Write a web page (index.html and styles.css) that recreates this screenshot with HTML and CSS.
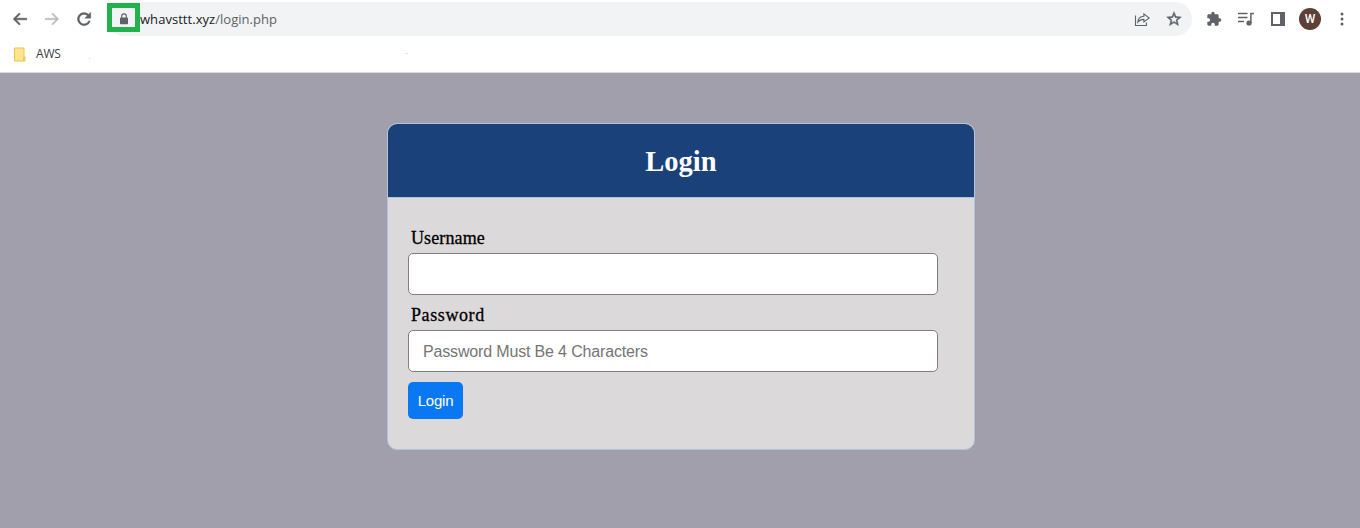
FILE: index.html
```html
<!DOCTYPE html>
<html lang="en">
<head>
<meta charset="utf-8">
<title>Login</title>
<link rel="stylesheet" href="styles.css">
</head>
<body>
<header class="chrome">
  <div class="toolbar">
    <nav class="nav">
      <svg class="icon" viewBox="0 0 24 24"><path class="dark" d="M21 11H6.8l5.6-5.6L11 4l-8 8 8 8 1.4-1.4L6.8 13H21z" stroke="#5f6368" stroke-width=".9"/></svg>
      <svg class="icon" viewBox="0 0 24 24"><path class="faded" d="M3 11h14.2l-5.6-5.6L13 4l8 8-8 8-1.4-1.4 5.6-5.6H3z" stroke="#babcbe" stroke-width=".6"/></svg>
      <svg class="icon" viewBox="0 0 24 24"><path class="dark" d="M18.2 5.8A8.8 8.8 0 1 0 20.5 14.5h-2.6A6.3 6.3 0 1 1 16.4 7.6L13 11h8V3z" stroke="#5f6368" stroke-width=".5"/></svg>
    </nav>
    <div class="omnibox">
      <span class="lock"><svg width="14" height="14" viewBox="0 0 14 14"><path d="M4.700 6V4.200a2.300 2.300 0 0 1 4.600 0V6" fill="none" stroke="#5f6368" stroke-width="1.100"/><rect class="dark" x="3" y="5.500" width="8" height="6.800" rx=".8"/></svg></span>
      <span class="url"><span class="host">whavsttt.xyz</span><span class="path">/login.php</span></span>
      <svg class="box-icon share" viewBox="0 0 16 16"><path class="line" d="M1.500 4.500v10h10.900v-3M3.800 11.200C4 7.600 6.100 5.400 9.900 5.200V2.800L15.200 7l-5.300 4V8.400c-2.800-.1-4.500.7-6.100 2.800z"/></svg>
      <svg class="box-icon star" viewBox="1 1 22 22"><path class="dark" d="M22 9.240l-7.190-.620L12 2 9.190 8.630 2 9.240l5.460 4.730L5.820 21 12 17.270 18.180 21l-1.630-7.030L22 9.240zM12 15.400l-3.760 2.270 1-4.280-3.320-2.880 4.380-.380L12 6.100l1.710 4.040 4.380.380-3.320 2.880 1 4.280z" stroke="#5f6368" stroke-width=".7"/></svg>
    </div>
    <div class="actions">
      <svg class="action puzzle" viewBox="0 0 24 24"><path class="dark" d="M20.500 11H19V7c0-1.100-.900-2-2-2h-4V3.500a2.500 2.500 0 0 0-5 0V5H4c-1.100 0-2 .900-2 2v3.800h1.500a2.700 2.700 0 0 1 0 5.400H2V20c0 1.100.900 2 2 2h3.800v-1.500a2.700 2.700 0 0 1 5.400 0V22H17c1.100 0 2-.900 2-2v-4h1.500a2.500 2.500 0 0 0 0-5z"/></svg>
      <svg class="action" viewBox="0 0 16 16"><path class="line media" d="M0 2.500h9.500M0 6.500h9.500M0 10.500h6M12.900 12V2.500H16"/><circle class="dark" cx="11" cy="12" r="2.600"/></svg>
      <svg class="action" viewBox="0 0 16 16"><path class="dark" d="M1 1h14v14H1zM3 3v10h7V3z" fill-rule="evenodd"/></svg>
      <span class="avatar">W</span>
      <svg class="more" viewBox="0 0 4 16"><circle class="dark" cx="2" cy="3" r="1.500"/><circle class="dark" cx="2" cy="8" r="1.500"/><circle class="dark" cx="2" cy="13" r="1.500"/></svg>
    </div>
  </div>
  <div class="bookmarks">
    <svg width="13" height="15" viewBox="0 0 13 15"><path d="M1.500 1h9.500v9h1v4H1.500z" fill="#ffe591" stroke="#e7c547"/><path d="M10.500 13.500v-3H12" fill="none" stroke="#e7c547"/></svg>
    <span class="bookmark">AWS</span>
    <i class="speck"></i><i class="speck dash"></i>
  </div>
</header>
<main class="page">
  <section class="card">
    <h1 class="title">Login</h1>
    <form class="form">
      <label class="label" for="username">Username</label>
      <input class="input" id="username" type="text">
      <label class="label wide" for="password">Password</label>
      <input class="input" id="password" type="password" placeholder="Password Must Be 4 Characters">
      <button class="submit" type="button">Login</button>
    </form>
  </section>
</main>
</body>
</html>
```
FILE: styles.css
```css
* { box-sizing: border-box; }
body { margin: 0; height: 528px; overflow: hidden; display: flex; flex-direction: column; background: #a09fab; }
.dark { fill: #5f6368; }
.faded { fill: #babcbe; }
.line { fill: none; stroke: #5f6368; stroke-width: 1.1; }
.media { stroke-width: 1.5; }
.chrome { height: 73px; flex: none; background: #fff; border-bottom: 1px solid #dadbdf; font-family: "Open Sans", "Noto Sans", sans-serif; }
.toolbar { height: 38px; display: flex; align-items: center; }
.nav { display: flex; gap: 14px; width: 107px; padding-left: 11px; }
.icon { width: 18px; height: 18px; }
.omnibox { width: 1085px; height: 34px; display: flex; align-items: center; background: #f1f3f4; border-radius: 17px; }
.lock { width: 33px; height: 29px; margin-top: -3px; border: 5px solid #22b14c; display: flex; align-items: center; justify-content: center; }
.lock svg { margin-top: 2px; }
.url { font-size: 13px; line-height: 20px; letter-spacing: .04px; white-space: nowrap; }
.host { color: #202124; }
.path { color: #5f6368; }
.box-icon { width: 16px; height: 16px; }
.share { margin-left: auto; }
.star { margin: 0 10px 0 16px; }
.actions { display: flex; align-items: center; padding-left: 14px; gap: 16px; }
.action { width: 16px; height: 16px; }
.avatar { width: 22px; height: 22px; margin: 0 -3px; border-radius: 50%; background: #5d4037; color: #fff; font: 500 12px/22px Roboto, sans-serif; text-align: center; }
.more { width: 4px; height: 16px; margin-left: 6px; }
.bookmarks { height: 32px; display: flex; align-items: center; padding-left: 13px; }
.bookmark { width: 53px; margin-top: -2px; padding-left: 10px; font-size: 12px; letter-spacing: -.2px; color: #3c4043; }
.speck { width: 1px; height: 1px; margin: 9px 0 0 10px; background: #f0cf9a; }
.dash { width: 3px; margin: -1px 0 0 315px; background: #fbe3c4; }
.page { flex: 1; padding-top: 50px; }
.card { width: 588px; height: 327px; margin-left: 387px; border: 1px solid #b0c4de; border-radius: 10px; background: #dbd9da; overflow: hidden; }
.title { height: 74px; margin: 0; border-bottom: 1px solid #b0c4de; background: #1b417a; color: #fff; font: bold 28.500px/75px "Liberation Serif", serif; text-align: center; }
.form { display: flex; flex-direction: column; align-items: flex-start; padding: 26px 20px 0; }
.label { height: 29px; padding-left: 3px; color: #000; font: 18px/29px "Liberation Serif", serif; letter-spacing: .12px; -webkit-text-stroke: .3px #000; }
.wide { letter-spacing: .6px; }
.input { width: 530px; height: 42px; margin: 0 0 6px; padding: 2px 14px 0; border: 1px solid gray; border-radius: 5px; background: #fff; font: 16px "Liberation Sans", sans-serif; letter-spacing: -.16px; }
.input::placeholder { color: #757575; }
.submit { width: 55px; height: 37px; margin-top: 4px; padding: 0; border: 0; border-radius: 5px; background: #0a78f2; color: #fff; font: 15px "Liberation Sans", sans-serif; letter-spacing: -.25px; }
```
